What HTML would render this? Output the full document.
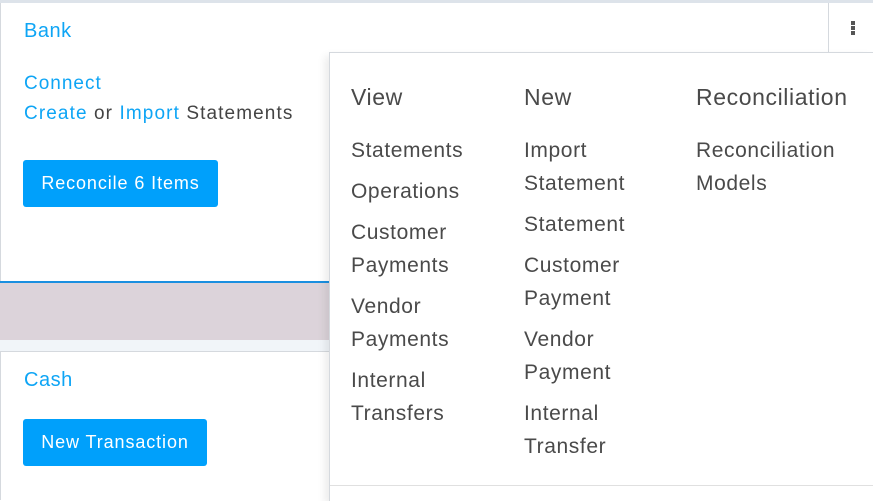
<!DOCTYPE html>
<html><head><style>
body{margin:0;width:873px;height:500px;overflow:hidden;background:#fff;font-family:"Liberation Sans",sans-serif;position:relative}
.a{position:absolute}
.blue{color:#0ea5f5}
.btn{position:absolute;background:#00a0fb;color:#fff;border-radius:3px;font-size:18px;text-align:center;letter-spacing:0.9px}
.menu div{position:absolute;font-size:21px;color:#4a4a4a;line-height:33px;letter-spacing:0.6px}
</style></head><body>
<div class="a" style="left:0;top:0;width:873px;height:3px;background:#dde3ea"></div>
<div class="a" style="left:0;top:3px;width:1px;height:497px;background:#d5d9de"></div>
<div class="a blue" style="left:24px;top:20px;font-size:20px;letter-spacing:0.5px">Bank</div>
<div class="a blue" style="left:24px;top:73px;font-size:19px;letter-spacing:1px">Connect</div>
<div class="a" style="left:24px;top:103px;font-size:19px;color:#444;letter-spacing:1.1px"><span class="blue">Create</span> or <span class="blue">Import</span> Statements</div>
<div class="btn" style="left:23px;top:160px;width:195px;height:47px;line-height:47px">Reconcile 6 Items</div>
<div class="a" style="left:0;top:281px;width:330px;height:2px;background:#1a8fe0"></div>
<div class="a" style="left:0;top:283px;width:330px;height:57px;background:#dcd3da"></div>
<div class="a" style="left:0;top:340px;width:330px;height:11px;background:#f1f5f9;border-bottom:1px solid #d5d9de"></div>
<div class="a blue" style="left:24px;top:369px;font-size:20px;letter-spacing:0.5px">Cash</div>
<div class="btn" style="left:23px;top:419px;width:184px;height:47px;line-height:47px">New Transaction</div>
<div class="a" style="left:828px;top:3px;width:1px;height:49px;background:#d5d9de"></div>
<div class="a" style="left:851px;top:21px;width:4px;height:14px;background:repeating-linear-gradient(#555 0 4px,transparent 4px 5px)"></div>
<div class="a menu" style="left:329px;top:52px;width:544px;height:448px;background:#fff;border-left:1px solid #d5d9de;border-top:1px solid #d5d9de;box-shadow:-4px 4px 8px rgba(0,0,0,.08)">
<div style="left:21px;top:28px;font-size:23px">View</div>
<div style="left:194px;top:28px;font-size:23px">New</div>
<div style="left:366px;top:28px;font-size:23px">Reconciliation</div>
<div style="left:21px;top:81px">Statements<br><span style="display:block;margin-top:8px">Operations</span><span style="display:block;margin-top:8px">Customer<br>Payments</span><span style="display:block;margin-top:8px">Vendor<br>Payments</span><span style="display:block;margin-top:8px">Internal<br>Transfers</span></div>
<div style="left:194px;top:81px">Import<br>Statement<span style="display:block;margin-top:8px">Statement</span><span style="display:block;margin-top:8px">Customer<br>Payment</span><span style="display:block;margin-top:8px">Vendor<br>Payment</span><span style="display:block;margin-top:8px">Internal<br>Transfer</span></div>
<div style="left:366px;top:81px">Reconciliation<br>Models</div>
<div style="left:0;top:432px;width:544px;height:1px;background:#e0e0e0"></div>
</div>
</body></html>
